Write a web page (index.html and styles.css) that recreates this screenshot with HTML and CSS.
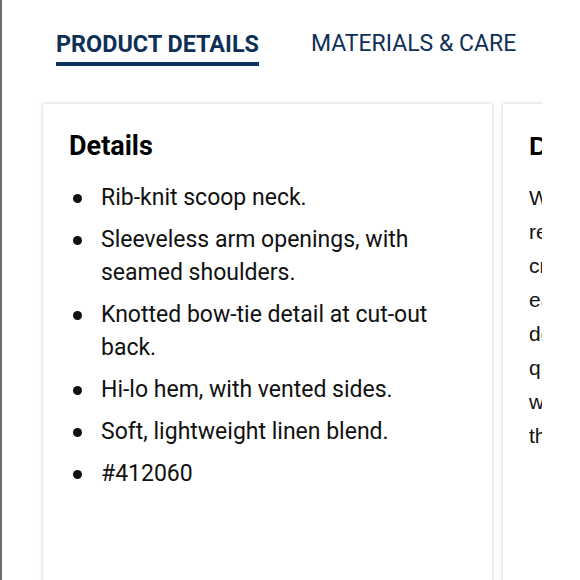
FILE: index.html
```html
<!DOCTYPE html>
<html lang="en">
<head>
<meta charset="utf-8">
<title>Product Details</title>
<link rel="stylesheet" href="styles.css">
</head>
<body>
<div class="page">
  <nav class="tabs">
    <div class="tab active">PRODUCT DETAILS</div>
    <div class="tab">MATERIALS &amp; CARE</div>
  </nav>
  <div class="track">
    <section class="card">
      <h2 class="card-title">Details</h2>
      <ul class="list">
        <li>Rib-knit scoop neck.</li>
        <li>Sleeveless arm openings, with seamed shoulders.</li>
        <li>Knotted bow-tie detail at cut-out back.</li>
        <li>Hi-lo hem, with vented sides.</li>
        <li>Soft, lightweight linen blend.</li>
        <li>#412060</li>
      </ul>
    </section>
    <section class="card card-alt">
      <h2 class="card-title alt-title">Designed to Last</h2>
      <p class="alt-text">We<br>responsibly<br>create<br>each<br>design<br>quality<br>wear<br>that</p>
    </section>
  </div>
</div>
</body>
</html>
```
FILE: styles.css
```css
html, body {
  margin: 0;
  padding: 0;
  background: #fff;
}
.page {
  border-left: 2px solid #6b6b6b;
  height: 580px;
  overflow: hidden;
  box-sizing: border-box;
}
.tabs {
  display: flex;
  gap: 52px;
  padding: 31px 0 0 54px;
}
.tab {
  font-family: Roboto, "Liberation Sans", sans-serif;
  font-size: 23px;
  color: #0e2f56;
  line-height: 26px;
  padding-bottom: 5px;
  border-bottom: 4px solid transparent;
}
.tab.active {
  font-weight: 700;
  font-size: 23.4px;
  border-bottom-color: #0d3461;
}
.track {
  display: flex;
  gap: 11px;
  width: 540px;
  overflow: hidden;
  margin-top: 34px;
  padding: 4px 0 0 41px;
  box-sizing: border-box;
  height: 490px;
}
.card {
  flex: 0 0 449px;
  background: #fff;
  box-shadow: 0 0 4px rgba(0,0,0,0.22);
  box-sizing: border-box;
  padding: 27px 26px 0 26px;
  height: 520px;
}
.card-title {
  font-family: Roboto, "Liberation Sans", sans-serif;
  font-weight: 700;
  font-size: 27px;
  line-height: 30px;
  margin: 0 0 20px 0;
  color: #000;
}
.list {
  list-style: none;
  margin: 0;
  padding: 0 0 0 4px;
  font-family: Roboto, "Liberation Sans", sans-serif;
  font-size: 23px;
  line-height: 33px;
  color: #111;
}
.list li {
  display: grid;
  grid-template-columns: 28px 1fr;
  margin-bottom: 9px;
}
.list li::before {
  content: "";
  width: 9px;
  height: 9px;
  border-radius: 50%;
  background: #111;
  margin-top: 13px;
}
.alt-title {
  font-family: "Liberation Sans", Arial, sans-serif;
  font-size: 26px;
}
.alt-text {
  margin: 0;
  font-family: "Liberation Sans", Arial, sans-serif;
  font-size: 21px;
  line-height: 34px;
  color: #111;
}
```
